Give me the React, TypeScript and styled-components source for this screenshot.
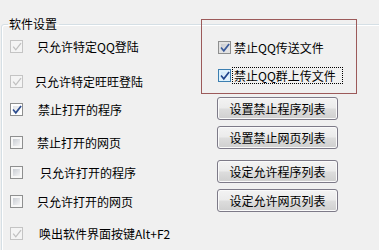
import React from "react";
import styled, { createGlobalStyle, css } from "styled-components";

const Global = createGlobalStyle`
  html, body { margin: 0; padding: 0; background: #f0f0f0; overflow: hidden; }
  body {
    width: 379px; height: 250px;
    font-family: "Noto Sans CJK SC", "Liberation Sans", sans-serif;
    font-size: 12px; color: #000;
  }
`;

const Page = styled.div`
  width: 379px;
  height: 250px;
  padding-top: 17px;
  box-sizing: border-box;
  overflow: hidden;
`;

const Group = styled.fieldset`
  margin: 0 0 0 1px;
  padding: 0;
  width: 440px;
  height: 300px;
  border: 1px solid #d5dfe5;
  border-radius: 3px;
  box-shadow: inset 1px 1px 0 #ffffff;
  min-inline-size: 0;
`;

const Legend = styled.legend`
  margin-left: 6px;
  padding: 0 2px 0 1px;
  line-height: 14px;
  height: 14px;
  font-size: 12px;
`;

const Body = styled.div`
  display: flex;
  align-items: flex-start;
`;

const LeftCol = styled.div`
  width: 199px;
  padding-left: 8px;
  box-sizing: border-box;
  display: flex;
  flex-direction: column;
`;

const Row = styled.div<{ $mt: number }>`
  display: flex;
  align-items: center;
  height: 13px;
  margin-top: ${(p) => p.$mt}px;
  white-space: nowrap;
`;

const Label = styled.span<{ $ml: number; $focus?: boolean }>`
  margin-left: ${(p) => p.$ml}px;
  line-height: 13px;
  ${(p) =>
    p.$focus &&
    css`
      outline: 1px dotted #000;
      outline-offset: 1px;
      padding-right: 5px;
    `}
`;

type Kind = "disabled" | "checked" | "unchecked" | "hot" | "pressed";

const boxStyles: Record<Kind, ReturnType<typeof css>> = {
  disabled: css`
    border-color: #c4c4c4;
    background: #f4f4f4;
    color: #c0c0c0;
  `,
  checked: css`
    border-color: #8e8f8f;
    background: linear-gradient(135deg, #dfe2e6, #fbfbfb) content-box, #fff;
    color: #2d4d8f;
  `,
  unchecked: css`
    border-color: #8e8f8f;
    background: linear-gradient(135deg, #c9cdd3, #f4f4f5) content-box, #f7f7f7;
    color: transparent;
  `,
  hot: css`
    border-color: #3c7fb1;
    background: linear-gradient(135deg, #cbe6f7, #eef8fd) content-box, #dff2fc;
    color: #21468c;
  `,
  pressed: css`
    border-color: #8e8f8f;
    background: linear-gradient(135deg, #c9cbcf, #e8e8e8) content-box, #e2e2e2;
    color: #3a5a9a;
  `,
};

const Box = styled.span<{ $kind: Kind }>`
  flex: none;
  position: relative;
  width: 13px;
  height: 13px;
  box-sizing: border-box;
  border: 1px solid;
  padding: 2px;
  display: inline-flex;
  align-items: center;
  justify-content: center;
  ${(p) => boxStyles[p.$kind]}
  svg { position: absolute; left: 1px; top: 1px; }
`;

const Check = ({ kind }: { kind: Kind }) => (
  <Box $kind={kind}>
    {kind !== "unchecked" && (
      <svg width="10" height="10" viewBox="0 0 10 10">
        <path
          d="M1.6 5.2 L3.8 7.8 L8.6 1.6"
          fill="none"
          stroke="currentColor"
          strokeWidth={kind === "disabled" ? 1.3 : 1.7}
          strokeLinecap="square"
        />
      </svg>
    )}
  </Box>
);

const RightCol = styled.div`
  display: flex;
  flex-direction: column;
  align-items: flex-start;
`;

const Highlight = styled.div`
  margin-top: -12px;
  width: 156px;
  height: 75px;
  box-sizing: border-box;
  border: 1px solid #9c5a5a;
  padding: 19px 0 0 16px;
  display: flex;
  flex-direction: column;
  gap: 12px;
`;

const InnerRow = styled.div`
  display: flex;
  align-items: center;
  height: 16px;
  white-space: nowrap;
`;

const Button = styled.button<{ $mt: number }>`
  margin: ${(p) => p.$mt}px 0 0 16px;
  width: 121px;
  height: 23px;
  padding: 0;
  border: 1px solid #7d7a88;
  border-radius: 3px;
  background: linear-gradient(#f3f3f3 0%, #ebebeb 48%, #dddddd 52%, #cfcfcf 100%);
  box-shadow: inset 0 0 0 1px #fafafa;
  font-family: "Noto Sans CJK SC", "Liberation Sans", sans-serif;
  font-size: 12px;
  line-height: 20px;
  color: #000;
  cursor: default;
`;

const left: { kind: Kind; text: string; mt: number; ml: number }[] = [
  { kind: "disabled", text: "只允许特定QQ登陆", mt: 9, ml: 14 },
  { kind: "disabled", text: "只允许特定旺旺登陆", mt: 22, ml: 12 },
  { kind: "checked", text: "禁止打开的程序", mt: 15, ml: 15 },
  { kind: "unchecked", text: "禁止打开的网页", mt: 20, ml: 14 },
  { kind: "unchecked", text: "只允许打开的程序", mt: 17, ml: 17 },
  { kind: "unchecked", text: "只允许打开的网页", mt: 16, ml: 14 },
  { kind: "disabled", text: "唤出软件界面按键Alt+F2", mt: 19, ml: 16 },
];

const buttons = [
  { text: "设置禁止程序列表", mt: 3 },
  { text: "设置禁止网页列表", mt: 6 },
  { text: "设定允许程序列表", mt: 11 },
  { text: "设定允许网页列表", mt: 6 },
];

export default function App() {
  return (
    <>
      <Global />
      <Page>
        <Group>
          <Legend>软件设置</Legend>
          <Body>
            <LeftCol>
              {left.map((r) => (
                <Row key={r.text} $mt={r.mt}>
                  <Check kind={r.kind} />
                  <Label $ml={r.ml}>{r.text}</Label>
                </Row>
              ))}
            </LeftCol>
            <RightCol>
              <Highlight>
                <InnerRow>
                  <Check kind="pressed" />
                  <Label $ml={3}>禁止QQ传送文件</Label>
                </InnerRow>
                <InnerRow>
                  <Check kind="hot" />
                  <Label $ml={3} $focus>
                    禁止QQ群上传文件
                  </Label>
                </InnerRow>
              </Highlight>
              {buttons.map((b) => (
                <Button key={b.text} $mt={b.mt}>
                  {b.text}
                </Button>
              ))}
            </RightCol>
          </Body>
        </Group>
      </Page>
    </>
  );
}
